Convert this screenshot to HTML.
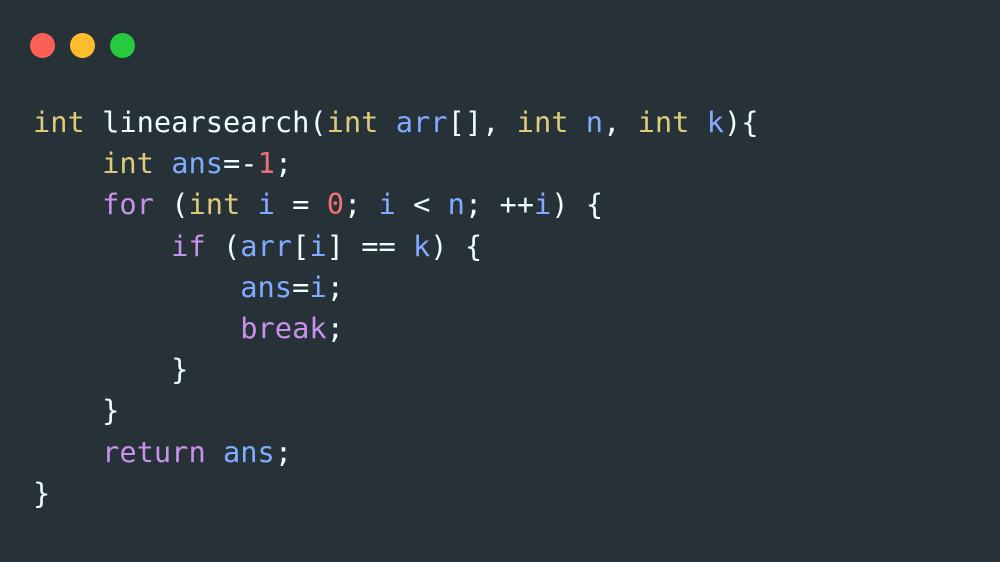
<!DOCTYPE html>
<html><head><style>
html,body{margin:0;padding:0;width:1000px;height:562px;background:#263238;overflow:hidden}
.d{position:absolute;top:32.5px;width:25px;height:25px;border-radius:50%}
pre{position:absolute;left:33px;top:102px;margin:0;font-family:"DejaVu Sans Mono","Liberation Mono",monospace;font-size:28.7px;line-height:41.2px;color:#EEFFFF;letter-spacing:0}
.y{color:#DDCB7A}.b{color:#82AAFF}.p{color:#C792EA}.r{color:#F07178}
</style></head><body>
<div class="d" style="left:29.5px;background:#FF5F56"></div>
<div class="d" style="left:69.5px;background:#FFBD2E"></div>
<div class="d" style="left:109.5px;background:#27C93F"></div>
<pre><span class="y">int</span> linearsearch(<span class="y">int</span> <span class="b">arr</span>[], <span class="y">int</span> <span class="b">n</span>, <span class="y">int</span> <span class="b">k</span>){
    <span class="y">int</span> <span class="b">ans</span>=-<span class="r">1</span>;
    <span class="p">for</span> (<span class="y">int</span> <span class="b">i</span> = <span class="r">0</span>; <span class="b">i</span> &lt; <span class="b">n</span>; ++<span class="b">i</span>) {
        <span class="p">if</span> (<span class="b">arr</span>[<span class="b">i</span>] == <span class="b">k</span>) {
            <span class="b">ans</span>=<span class="b">i</span>;
            <span class="p">break</span>;
        }
    }
    <span class="p">return</span> <span class="b">ans</span>;
}</pre>
</body></html>
